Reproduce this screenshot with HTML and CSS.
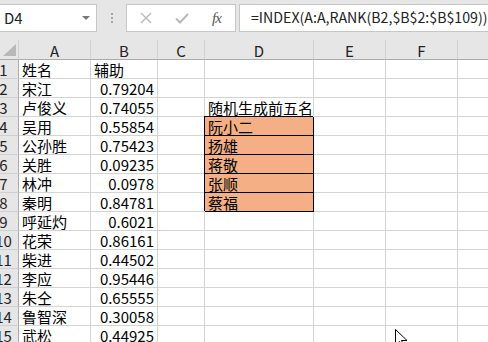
FILE: index.html
```html
<!DOCTYPE html>
<html>
  <head>
    <title>Sheet1</title>
    <link rel="stylesheet" href="styles.css">
  </head>
  <body>
    <!-- Formula bar -->
    <div class="toolbar">
      <div class="name-box">
        <span>D4</span>
        <i class="drop"></i>
      </div>
      <div class="grip"><i></i><i></i><i></i></div>
      <div class="fx-buttons">
        <svg class="btn-x" width="12" height="12" viewBox="0 0 12 12">
          <path d="M1 1L11 11M11 1L1 11" stroke="#b9b9b9" stroke-width="1.4" fill="none" />
        </svg>
        <svg class="btn-ok" width="14" height="11" viewBox="0 0 14 11">
          <path d="M1 5.5L5 9.5L13 1" stroke="#b9b9b9" stroke-width="2" fill="none" />
        </svg>
        <span class="fx">fx</span>
      </div>
      <div class="formula">=INDEX(A:A,RANK(B2,$B$2:$B$109))</div>
    </div>

    <!-- Grid -->
    <div class="sheet">
      <div class="row head">
        <div class="rh corner">
          <svg width="13" height="12" viewBox="0 0 13 12"><path d="M13 0V12H0Z" fill="#b8b8b8" /></svg>
        </div>
        <div class="ch c-a">A</div>
        <div class="ch c-b">B</div>
        <div class="ch c-c">C</div>
        <div class="ch c-d">D</div>
        <div class="ch c-e">E</div>
        <div class="ch c-f">F</div>
        <div class="ch c-g"></div>
      </div>

      <div class="row"><div class="rh">1</div><div class="cell c-a">姓名</div><div class="cell c-b">辅助</div><div class="cell c-c"></div><div class="cell c-d"></div><div class="cell c-e"></div><div class="cell c-f"></div><div class="cell c-g"></div></div>
      <div class="row"><div class="rh">2</div><div class="cell c-a">宋江</div><div class="cell c-b num">0.79204</div><div class="cell c-c"></div><div class="cell c-d"></div><div class="cell c-e"></div><div class="cell c-f"></div><div class="cell c-g"></div></div>
      <div class="row"><div class="rh">3</div><div class="cell c-a">卢俊义</div><div class="cell c-b num">0.74055</div><div class="cell c-c"></div><div class="cell c-d">随机生成前五名</div><div class="cell c-e"></div><div class="cell c-f"></div><div class="cell c-g"></div></div>
      <div class="row"><div class="rh">4</div><div class="cell c-a">吴用</div><div class="cell c-b num">0.55854</div><div class="cell c-c"></div><div class="cell c-d pick">阮小二</div><div class="cell c-e"></div><div class="cell c-f"></div><div class="cell c-g"></div></div>
      <div class="row"><div class="rh">5</div><div class="cell c-a">公孙胜</div><div class="cell c-b num">0.75423</div><div class="cell c-c"></div><div class="cell c-d pick">扬雄</div><div class="cell c-e"></div><div class="cell c-f"></div><div class="cell c-g"></div></div>
      <div class="row"><div class="rh">6</div><div class="cell c-a">关胜</div><div class="cell c-b num">0.09235</div><div class="cell c-c"></div><div class="cell c-d pick">蒋敬</div><div class="cell c-e"></div><div class="cell c-f"></div><div class="cell c-g"></div></div>
      <div class="row"><div class="rh">7</div><div class="cell c-a">林冲</div><div class="cell c-b num">0.0978</div><div class="cell c-c"></div><div class="cell c-d pick">张顺</div><div class="cell c-e"></div><div class="cell c-f"></div><div class="cell c-g"></div></div>
      <div class="row"><div class="rh">8</div><div class="cell c-a">秦明</div><div class="cell c-b num">0.84781</div><div class="cell c-c"></div><div class="cell c-d pick">蔡福</div><div class="cell c-e"></div><div class="cell c-f"></div><div class="cell c-g"></div></div>
      <div class="row"><div class="rh">9</div><div class="cell c-a">呼延灼</div><div class="cell c-b num">0.6021</div><div class="cell c-c"></div><div class="cell c-d"></div><div class="cell c-e"></div><div class="cell c-f"></div><div class="cell c-g"></div></div>
      <div class="row"><div class="rh">10</div><div class="cell c-a">花荣</div><div class="cell c-b num">0.86161</div><div class="cell c-c"></div><div class="cell c-d"></div><div class="cell c-e"></div><div class="cell c-f"></div><div class="cell c-g"></div></div>
      <div class="row"><div class="rh">11</div><div class="cell c-a">柴进</div><div class="cell c-b num">0.44502</div><div class="cell c-c"></div><div class="cell c-d"></div><div class="cell c-e"></div><div class="cell c-f"></div><div class="cell c-g"></div></div>
      <div class="row"><div class="rh">12</div><div class="cell c-a">李应</div><div class="cell c-b num">0.95446</div><div class="cell c-c"></div><div class="cell c-d"></div><div class="cell c-e"></div><div class="cell c-f"></div><div class="cell c-g"></div></div>
      <div class="row"><div class="rh">13</div><div class="cell c-a">朱仝</div><div class="cell c-b num">0.65555</div><div class="cell c-c"></div><div class="cell c-d"></div><div class="cell c-e"></div><div class="cell c-f"></div><div class="cell c-g"></div></div>
      <div class="row"><div class="rh">14</div><div class="cell c-a">鲁智深</div><div class="cell c-b num">0.30058</div><div class="cell c-c"></div><div class="cell c-d"></div><div class="cell c-e"></div><div class="cell c-f"></div><div class="cell c-g"></div></div>
      <div class="row"><div class="rh">15</div><div class="cell c-a">武松</div><div class="cell c-b num">0.44925</div><div class="cell c-c"></div><div class="cell c-d"></div><div class="cell c-e"></div><div class="cell c-f"></div><div class="cell c-g"></div></div>
    </div>

    <!-- Mouse pointer -->
    <svg class="pointer" width="13" height="20" viewBox="0 0 13 20">
      <path d="M0.5 0.5V16.5L4.5 12.5L7.5 19L9.5 18L6.5 11.5H12Z" fill="#fff" stroke="#000" stroke-width="1" />
    </svg>
  </body>
</html>
```

FILE: styles.css
```css
body {
  margin: 0;
  width: 488px;
  height: 342px;
  overflow: hidden;
  background-color: #fff;
  font-family: "Noto Sans CJK SC", "Liberation Sans", sans-serif;
  font-size: 15px;
  color: #000;
  position: relative;
}

/* Formula bar */
.toolbar {
  display: flex;
  align-items: flex-start;
  height: 40px;
  padding-top: 4px;
  box-sizing: border-box;
  background-color: #e6e6e6;
}

.name-box {
  width: 98px;
  height: 28px;
  margin-left: -1px;
  box-sizing: border-box;
  border: 1px solid #c6c6c6;
  background-color: #fff;
  display: flex;
  align-items: center;
  justify-content: space-between;
  padding: 0 6px 0 4px;
  line-height: 26px;
  color: #222;
}

.drop {
  width: 0;
  height: 0;
  border-left: 4px solid transparent;
  border-right: 4px solid transparent;
  border-top: 4px solid #777;
}

.grip {
  width: 29px;
  height: 28px;
  display: flex;
  flex-direction: column;
  align-items: center;
  justify-content: center;
  gap: 2px;
}

.grip i {
  width: 2px;
  height: 2px;
  background-color: #a6a6a6;
}

.fx-buttons {
  width: 110px;
  height: 28px;
  box-sizing: border-box;
  border: 1px solid #c6c6c6;
  background-color: #fff;
  display: flex;
  align-items: center;
  padding-left: 13px;
}

.btn-x {
  margin-right: 23px;
}

.btn-ok {
  margin-right: 23px;
}

.fx {
  font-family: "Liberation Serif", serif;
  font-style: italic;
  font-size: 15px;
  color: #555;
  letter-spacing: -1px;
}

.formula {
  flex: 1;
  min-width: 0;
  height: 28px;
  margin-left: 3px;
  margin-right: -10px;
  box-sizing: border-box;
  border: 1px solid #c6c6c6;
  background-color: #fff;
  padding-left: 11px;
  font-size: 14.2px;
  line-height: 25px;
  color: #222;
  white-space: nowrap;
}

/* Sheet grid */
.sheet {
  margin-left: -11px;
}

.row {
  display: flex;
  height: 19px;
}

.row.head {
  height: 20px;
  background-color: #e6e6e6;
}

.rh {
  width: 30px;
  flex: none;
  box-sizing: border-box;
  background-color: #e6e6e6;
  border-right: 1px solid #ababab;
  border-bottom: 1px solid #d0d0d0;
  text-align: center;
  line-height: 19px;
  color: #222;
}

.rh.corner {
  border-bottom: 1px solid #ababab;
  display: flex;
  align-items: flex-end;
  justify-content: flex-end;
  padding: 0 2px 3px 0;
  border-right-color: #d0d0d0;
}

.ch {
  flex: none;
  box-sizing: border-box;
  border-right: 1px solid #d0d0d0;
  border-bottom: 1px solid #ababab;
  text-align: center;
  line-height: 21px;
  color: #222;
}

.cell {
  flex: none;
  height: 19px;
  box-sizing: border-box;
  border-right: 1px solid #d4d4d4;
  border-bottom: 1px solid #d4d4d4;
  padding: 0 3px;
  line-height: 19px;
  white-space: nowrap;
  overflow: hidden;
}

.num {
  text-align: right;
}

.c-a { width: 72px; }
.c-b { width: 67px; }
.c-c { width: 47px; }
.c-d { width: 109px; overflow: visible; }
.c-e { width: 72px; }
.c-f { width: 72px; }
.c-g { width: 60px; }

.cell.pick {
  background-color: #f4b084;
  border-right-color: #000;
  border-bottom-color: #000;
  box-shadow: -1px -1px 0 #000;
}

/* Mouse pointer over the grid */
.pointer {
  position: absolute;
  left: 395px;
  top: 329px;
}
```
